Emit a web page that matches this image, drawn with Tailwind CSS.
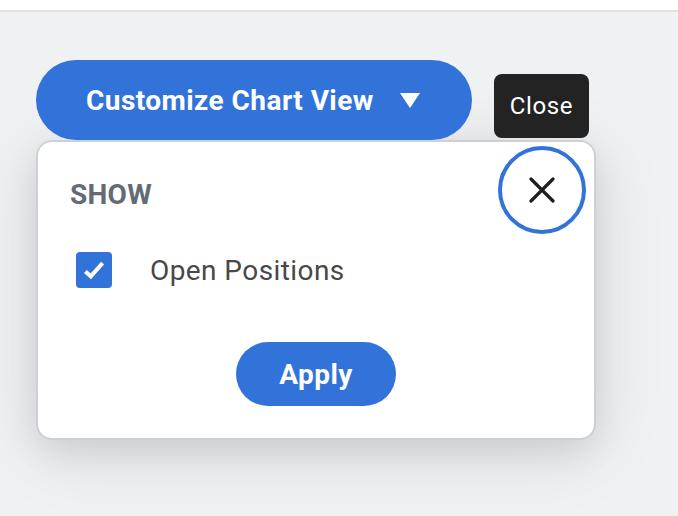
<!DOCTYPE html>
<html lang="en">
<head>
    <meta charset="UTF-8" />
    <title>Customize Chart View</title>
    <script src="https://cdn.jsdelivr.net/npm/@tailwindcss/browser@4"></script>
</head>
<body class="h-screen overflow-hidden bg-[#eff1f3] font-[Roboto,sans-serif]">

    <!-- Top bar edge -->
    <div class="h-3 bg-white border-b-2 border-[#dfe1e5]"></div>

    <div class="pl-9 pt-12">
        <!-- Dropdown trigger and tooltip -->
        <div class="flex items-start h-20">
            <button class="w-[436px] h-20 pl-[50px] flex items-center rounded-full bg-[#3273da] text-white text-[28px] font-bold tracking-[0.45px] whitespace-nowrap">
                <span class="w-[314px] pt-0.5 text-left">Customize Chart View</span>
                <svg class="w-5 h-[15px] mt-px" viewBox="0 0 20 15" fill="currentColor"><path d="M0 0h20L10 15z" /></svg>
            </button>
            <div class="ml-[22px] mt-3.5 w-[95px] h-16 shrink-0 flex items-center justify-center rounded-lg bg-[#232323] text-white text-2xl tracking-[0.6px]">Close</div>
        </div>

        <!-- Panel -->
        <div class="w-[560px] h-[300px] pl-8 rounded-2xl border-2 border-[#cdd0d5] bg-white shadow-[0_12px_32px_rgba(0,0,0,0.08),0_12px_72px_rgba(0,0,0,0.11)]">
            <div class="flex justify-between pr-2 pt-1">
                <h2 class="mt-[29px] text-[28px] leading-10 font-bold tracking-[0.3px] text-[#626b76]">SHOW</h2>
                <button class="w-[88px] h-[88px] flex items-center justify-center rounded-full border-4 border-[#3273da]">
                    <svg class="w-[26px] h-[26px]" viewBox="0 0 26 26" fill="none" stroke="#1f1f1f" stroke-width="3.2" stroke-linecap="round"><path d="M2 2l22 22M24 2L2 24" /></svg>
                </button>
            </div>
            <label class="ml-1.5 mt-[18px] h-9 flex items-center text-[28px] tracking-[0.42px] text-[#484848]">
                <span class="w-9 h-9 mr-[38px] flex items-center justify-center rounded bg-[#3273da]">
                    <svg class="w-5 h-5" viewBox="0 0 20 20" fill="none" stroke="#fff" stroke-width="4"><path d="M1.4 11.4l5.4 4.9L18.6 3" /></svg>
                </span>
                <span class="pt-0.5">Open Positions</span>
            </label>
            <div class="mt-[54px] pl-[166px]">
                <button class="w-40 h-16 pt-0.5 rounded-full bg-[#3273da] text-white text-[28px] font-bold tracking-[0.4px]">Apply</button>
            </div>
        </div>
    </div>
</body>
</html>
